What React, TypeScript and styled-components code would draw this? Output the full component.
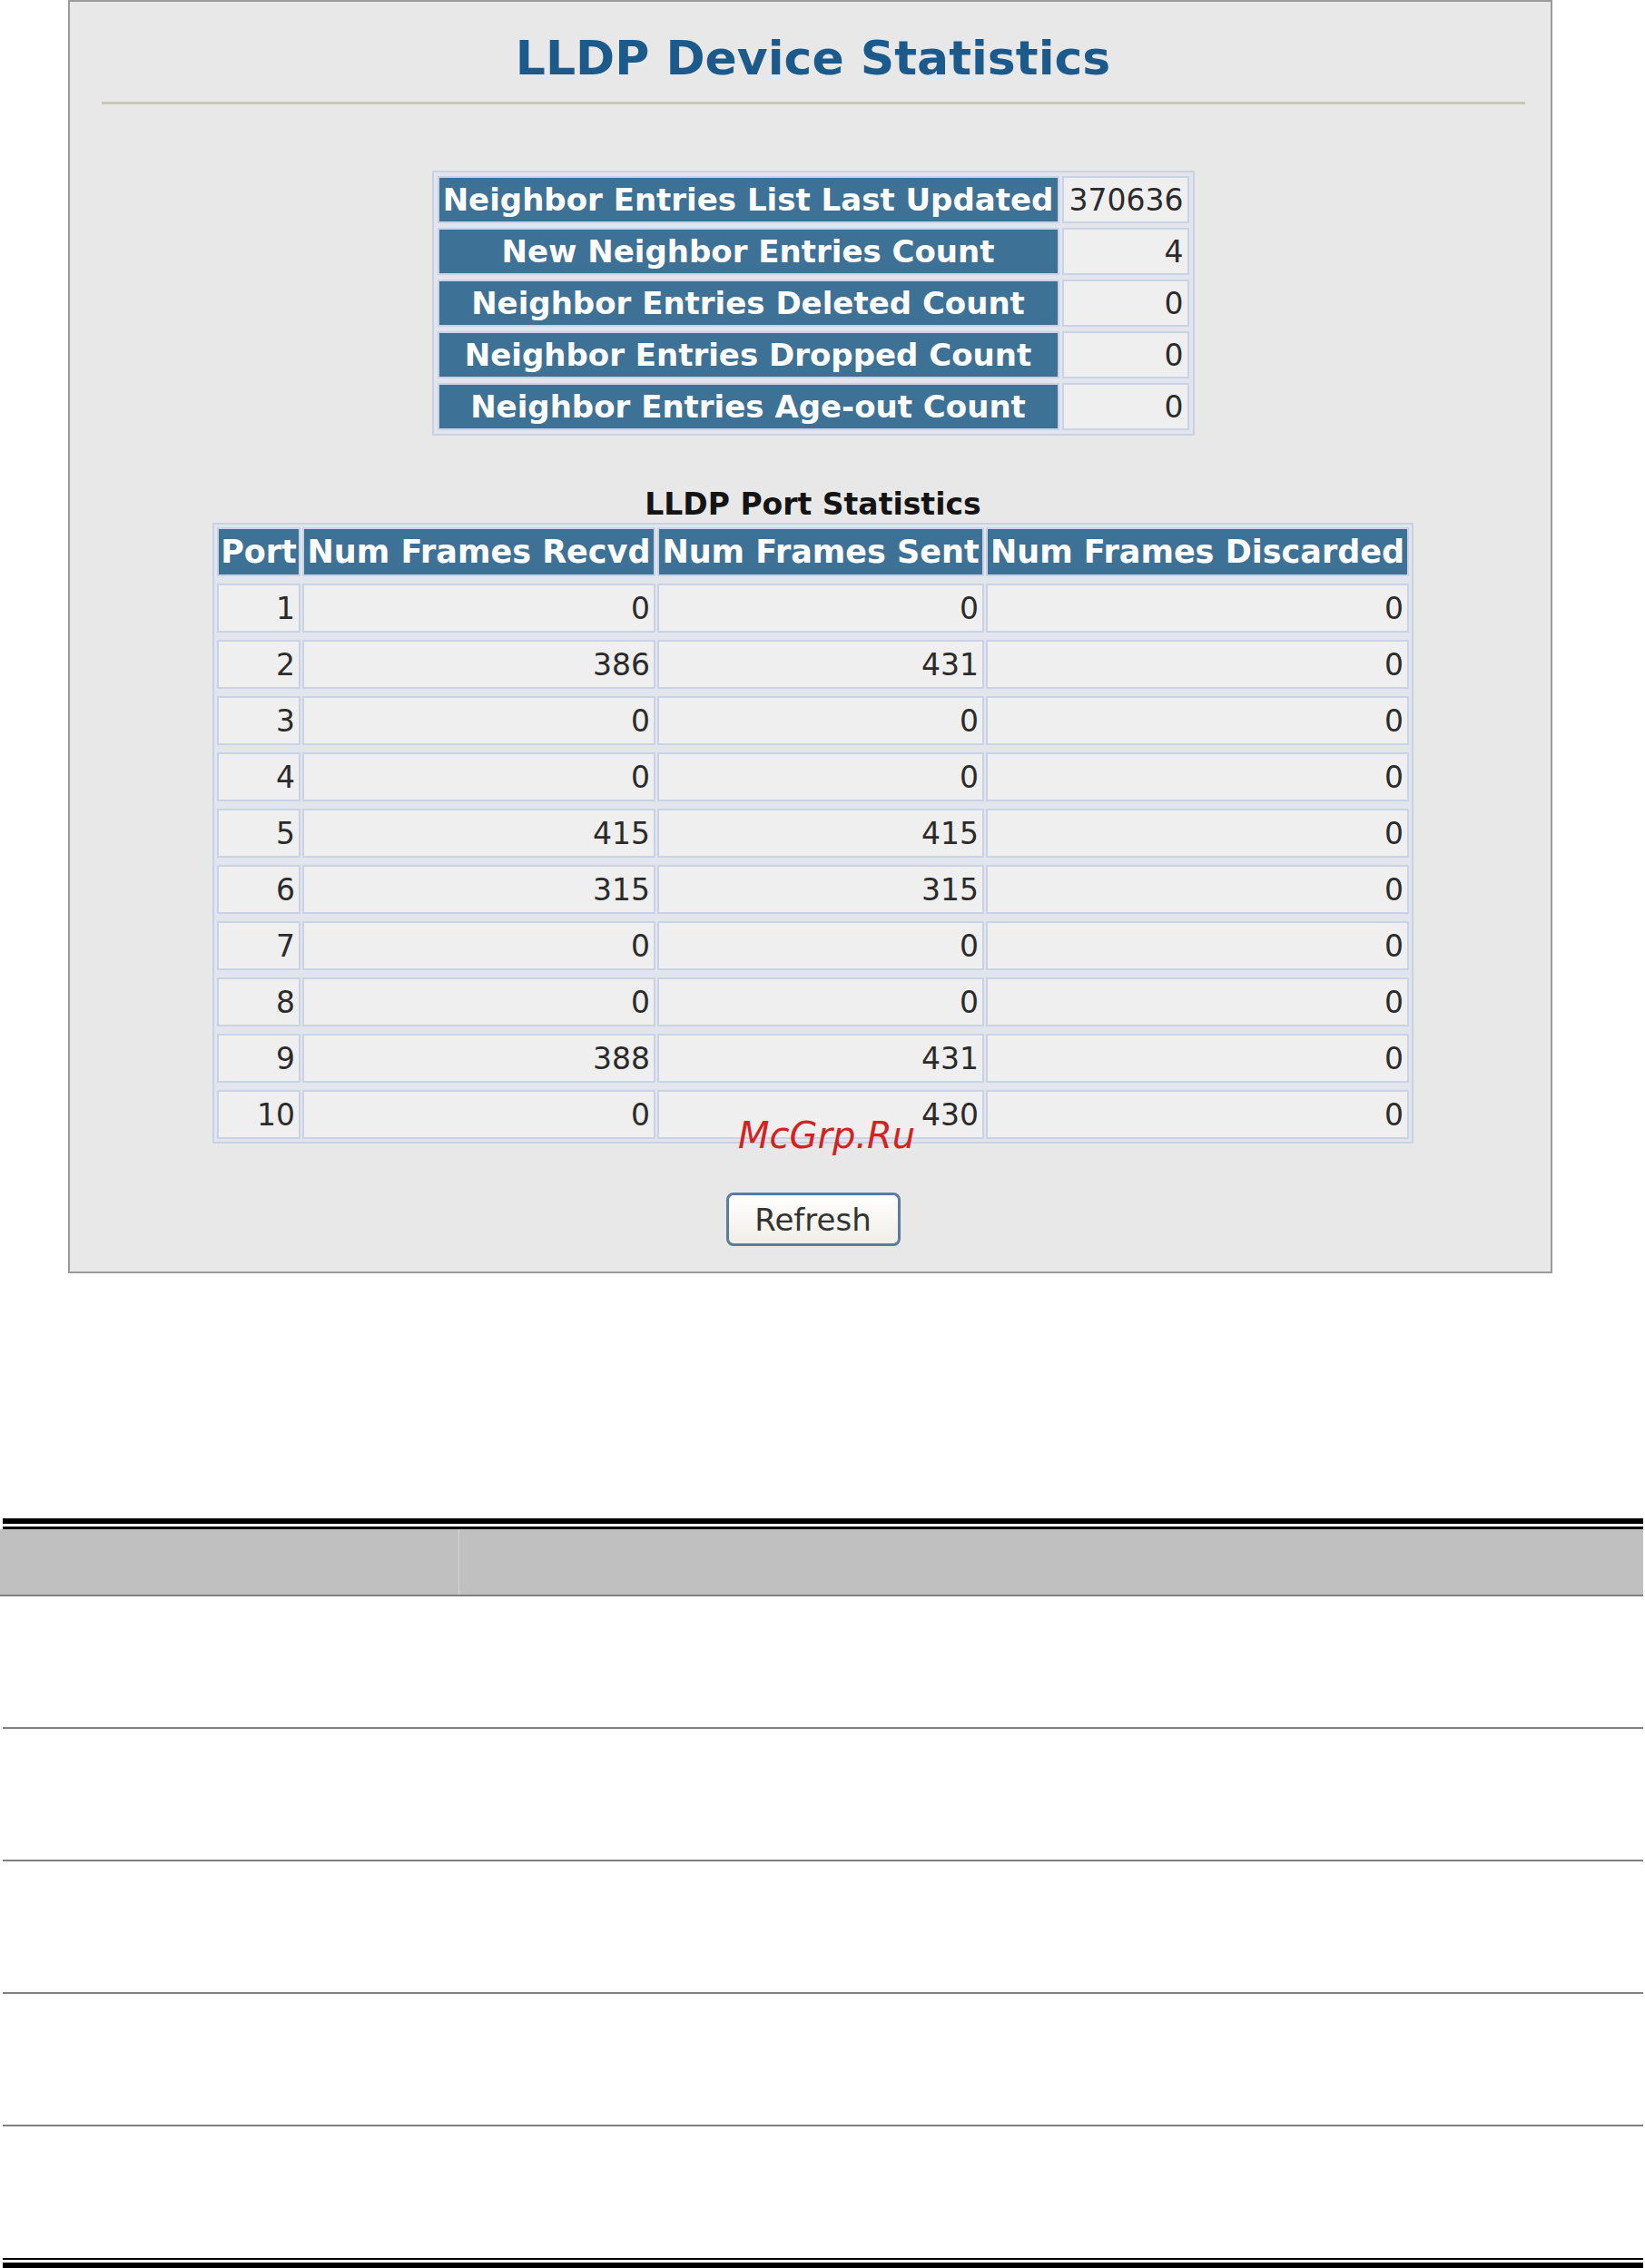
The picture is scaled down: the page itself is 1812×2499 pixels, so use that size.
import React from 'react';
import styled, { createGlobalStyle } from 'styled-components';

const GlobalStyle = createGlobalStyle`
  html, body {
    margin: 0;
    padding: 0;
    background: #ffffff;
  }
  body {
    font-family: "DejaVu Sans", Verdana, sans-serif;
  }
  * {
    box-sizing: border-box;
  }
`;

const Page = styled.div`
  width: 1812px;
  height: 2499px;
  overflow: hidden;
  display: flex;
  flex-direction: column;
`;

const Panel = styled.section`
  position: relative;
  width: 1635px;
  margin-left: 75px;
  border: 2px solid #9b9b9b;
  background: #e8e8e8;
  padding: 32px 0 28px 6px;
  display: flex;
  flex-direction: column;
  align-items: center;
`;

const Title = styled.h1`
  margin: 0;
  font-size: 52px;
  line-height: 60px;
  font-weight: 700;
  color: #1b5a8a;
`;

const Rule = styled.div`
  width: 1568px;
  margin-top: 18px;
  border-top: 3px solid #cbc5b1;
`;

const SummaryTable = styled.div`
  margin-top: 73px;
  display: grid;
  grid-template-columns: 685px 140px;
  grid-auto-rows: 52px;
  gap: 5px 3px;
  padding: 4px;
  border: 2px solid #c9d1e4;
  background: #e3e5ec;
`;

const Cell = styled.div<{ $head?: boolean; $size?: number }>`
  display: flex;
  align-items: center;
  justify-content: ${({ $head }) => ($head ? 'center' : 'flex-end')};
  padding: 0 4px;
  border: 2px solid #cad2e6;
  background: ${({ $head }) => ($head ? '#3e7196' : '#efefef')};
  color: ${({ $head }) => ($head ? '#ffffff' : '#2b2b2b')};
  font-weight: ${({ $head }) => ($head ? 700 : 400)};
  font-size: ${({ $size }) => $size || 33}px;
  white-space: nowrap;
  overflow: hidden;
`;

const SectionTitle = styled.h2`
  margin: 56px 0 0;
  font-size: 33px;
  line-height: 40px;
  font-weight: 700;
  color: #141414;
`;

const PortTable = styled.div`
  display: grid;
  grid-template-columns: 92px 389px 360px 466px;
  grid-auto-rows: 54px;
  gap: 8px 2px;
  padding: 3px;
  border: 2px solid #c9d1e4;
  background: #e3e5ec;
`;

const RefreshButton = styled.button`
  margin-top: 54px;
  width: 192px;
  height: 59px;
  border: 3px solid #5a7ca0;
  border-radius: 8px;
  background: linear-gradient(#ffffff, #f0eee6);
  font-family: "DejaVu Sans", Verdana, sans-serif;
  font-size: 34px;
  color: #333333;
  cursor: pointer;
`;

const Watermark = styled.span`
  position: absolute;
  left: 736px;
  top: 1229px;
  font-size: 40px;
  line-height: 40px;
  font-style: italic;
  color: #d42121;
  pointer-events: none;
`;

const DocTable = styled.div`
  margin: 270px 2px 0 3px;
  border-top: 6px solid #000000;
  border-bottom: 6px solid #000000;
`;

const DocRule = styled.div<{ $weight: number; $top?: boolean }>`
  height: ${({ $weight }) => $weight}px;
  background: #000000;
  margin: ${({ $top }) => ($top ? '3px 0 0' : '0 0 3px')};
`;

const DocHead = styled.div`
  margin-left: -3px;
  height: 74px;
  display: grid;
  grid-template-columns: 505px 1fr;
  background: #c0c0c0;
  border-bottom: 2px solid #808080;
`;

const DocHeadCell = styled.div`
  & + & {
    border-left: 1px solid #d4d4d4;
  }
`;

const DocRow = styled.div`
  height: 146px;
  border-bottom: 2px solid #808080;

  &:last-of-type {
    height: 145px;
    border-bottom: none;
  }
`;

const summary: [string, string][] = [
  ['Neighbor Entries List Last Updated', '370636'],
  ['New Neighbor Entries Count', '4'],
  ['Neighbor Entries Deleted Count', '0'],
  ['Neighbor Entries Dropped Count', '0'],
  ['Neighbor Entries Age-out Count', '0'],
];

const portHeaders = ['Port', 'Num Frames Recvd', 'Num Frames Sent', 'Num Frames Discarded'];

const ports: number[][] = [
  [1, 0, 0, 0],
  [2, 386, 431, 0],
  [3, 0, 0, 0],
  [4, 0, 0, 0],
  [5, 415, 415, 0],
  [6, 315, 315, 0],
  [7, 0, 0, 0],
  [8, 0, 0, 0],
  [9, 388, 431, 0],
  [10, 0, 430, 0],
];

const App: React.FC = () => {
  return (
    <>
      <GlobalStyle />
      <Page>
        <Panel>
          <Title>LLDP Device Statistics</Title>
          <Rule />

          <SummaryTable>
            {summary.map(([label, value]) => (
              <React.Fragment key={label}>
                <Cell $head $size={34}>{label}</Cell>
                <Cell>{value}</Cell>
              </React.Fragment>
            ))}
          </SummaryTable>

          <SectionTitle>LLDP Port Statistics</SectionTitle>
          <PortTable>
            {portHeaders.map(h => (
              <Cell key={h} $head $size={35}>{h}</Cell>
            ))}
            {ports.map(row =>
              row.map((v, i) => <Cell key={`${row[0]}-${i}`}>{v}</Cell>)
            )}
          </PortTable>

          <RefreshButton type="button">Refresh</RefreshButton>
          <Watermark>McGrp.Ru</Watermark>
        </Panel>

        <DocTable>
          <DocRule $weight={3} $top />
          <DocHead>
            <DocHeadCell />
            <DocHeadCell />
          </DocHead>
          <div>
            <DocRow />
            <DocRow />
            <DocRow />
            <DocRow />
            <DocRow />
          </div>
          <DocRule $weight={2} />
        </DocTable>
      </Page>
    </>
  );
};

export default App;
